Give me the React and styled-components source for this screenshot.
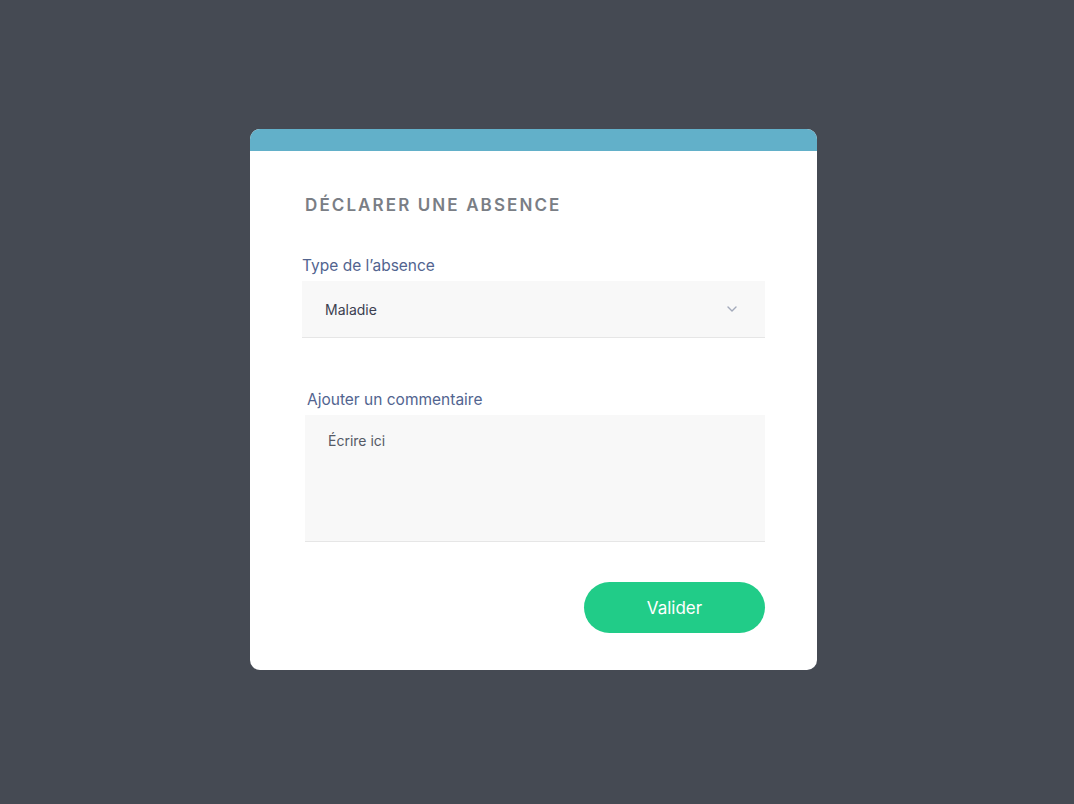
import React, { useState } from 'react'
import styled, { createGlobalStyle } from 'styled-components'

const GlobalStyle = createGlobalStyle`
  html, body {
    margin: 0;
    padding: 0;
    background: #454a53;
    font-family: 'Inter', 'Liberation Sans', sans-serif;
  }
  * {
    box-sizing: border-box;
  }
`

function App() {
  const [type, setType] = useState('Maladie')
  const [comment, setComment] = useState('')

  return (
    <>
      <GlobalStyle />
      <Page>
        <Card>
          <TopBar />
          <Body>
            <Title>Déclarer une absence</Title>
            <Field>
              <Label>Type de l’absence</Label>
              <SelectBox>
                <span>{type}</span>
                <svg width="10" height="6" viewBox="0 0 10 6" fill="none">
                  <path d="M1 1l4 4 4-4" stroke="#a3aabb" strokeWidth="1.4" strokeLinecap="round" strokeLinejoin="round" />
                </svg>
              </SelectBox>
            </Field>
            <Field $indent>
              <Label $shift>Ajouter un commentaire</Label>
              <TextArea
                placeholder="Écrire ici"
                value={comment}
                onChange={(e) => setComment(e.target.value)}
              />
            </Field>
            <Actions>
              <Button onClick={() => setType('Maladie')}>Valider</Button>
            </Actions>
          </Body>
        </Card>
      </Page>
    </>
  )
}

const Page = styled.div`
  width: 1074px;
  height: 804px;
  display: flex;
  justify-content: center;
  padding-top: 129px;
  padding-right: 7px;
`

const Card = styled.div`
  width: 567px;
  height: 541px;
  background: #fff;
  border-radius: 10px;
  overflow: hidden;
  display: flex;
  flex-direction: column;
`

const TopBar = styled.div`
  height: 22px;
  background: #62b0c9;
`

const Body = styled.div`
  padding: 40px 52px 0 52px;
  display: flex;
  flex-direction: column;
`

const Title = styled.h1`
  margin: 0 0 0 3px;
  font-size: 17px;
  line-height: 28px;
  font-weight: 600;
  letter-spacing: 2.1px;
  text-transform: uppercase;
  color: #7a7e85;
`

const Field = styled.div`
  display: flex;
  flex-direction: column;
  margin-top: ${(p) => (p.$indent ? '52px' : '37px')};
  padding-left: ${(p) => (p.$indent ? '3px' : '0')};
`

const Label = styled.label`
  font-size: 15.5px;
  line-height: 20px;
  color: #52648f;
  margin-bottom: 5px;
  padding-left: ${(p) => (p.$shift ? '2px' : '0')};
`

const SelectBox = styled.div`
  height: 57px;
  background: #f8f8f8;
  border-bottom: 1px solid #e6e6e6;
  display: flex;
  align-items: center;
  justify-content: space-between;
  padding: 0 28px 0 23px;
  font-size: 14px;
  color: #3c4050;
`

const TextArea = styled.textarea`
  height: 127px;
  resize: none;
  border: none;
  border-bottom: 1px solid #e6e6e6;
  background: #f8f8f8;
  padding: 17px 23px;
  font-family: inherit;
  font-size: 14px;
  color: #3c4050;
  outline: none;
  &::placeholder {
    color: #555a66;
  }
`

const Actions = styled.div`
  display: flex;
  justify-content: flex-end;
  margin-top: 40px;
`

const Button = styled.button`
  width: 181px;
  height: 51px;
  border: none;
  border-radius: 26px;
  background: #21cc88;
  color: #fff;
  font-family: inherit;
  font-size: 17px;
  cursor: pointer;
`

export default App
